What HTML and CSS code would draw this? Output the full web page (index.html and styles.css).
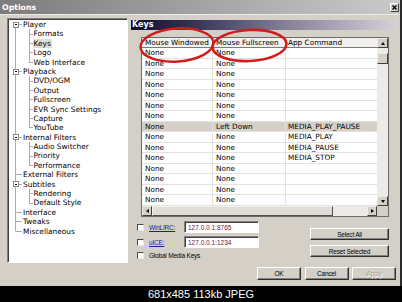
FILE: index.html
```html
<!DOCTYPE html>
<html>
<head>
<meta charset="utf-8">
<link rel="stylesheet" href="styles.css">
</head>
<body>
<div class="window">
  <div class="titlebar">
    <span class="title">Options</span>
    <span class="close"><svg width="5" height="5" viewBox="0 0 5 5"><path d="M0.5 0.5L4.5 4.5M4.5 0.5L0.5 4.5" stroke="#000" stroke-width="1.3"/></svg></span>
  </div>
  <div class="main">
    <div class="tree">
      <div class="tr root first"><span class="g0"><span class="box"></span></span><span class="lbl">Player</span></div>
      <div class="tr"><span class="g0"></span><span class="g1"></span><span class="lbl">Formats</span></div>
      <div class="tr"><span class="g0"></span><span class="g1"></span><span class="lbl sel">Keys</span></div>
      <div class="tr"><span class="g0"></span><span class="g1"></span><span class="lbl">Logo</span></div>
      <div class="tr"><span class="g0"></span><span class="g1 lastc"></span><span class="lbl">Web Interface</span></div>
      <div class="tr root"><span class="g0"><span class="box"></span></span><span class="lbl">Playback</span></div>
      <div class="tr"><span class="g0"></span><span class="g1"></span><span class="lbl">DVD/OGM</span></div>
      <div class="tr"><span class="g0"></span><span class="g1"></span><span class="lbl">Output</span></div>
      <div class="tr"><span class="g0"></span><span class="g1"></span><span class="lbl">Fullscreen</span></div>
      <div class="tr"><span class="g0"></span><span class="g1"></span><span class="lbl">EVR Sync Settings</span></div>
      <div class="tr"><span class="g0"></span><span class="g1"></span><span class="lbl">Capture</span></div>
      <div class="tr"><span class="g0"></span><span class="g1 lastc"></span><span class="lbl">YouTube</span></div>
      <div class="tr root"><span class="g0"><span class="box"></span></span><span class="lbl">Internal Filters</span></div>
      <div class="tr"><span class="g0"></span><span class="g1"></span><span class="lbl">Audio Switcher</span></div>
      <div class="tr"><span class="g0"></span><span class="g1"></span><span class="lbl">Priority</span></div>
      <div class="tr"><span class="g0"></span><span class="g1 lastc"></span><span class="lbl">Performance</span></div>
      <div class="tr root leaf"><span class="g0"></span><span class="lbl">External Filters</span></div>
      <div class="tr root"><span class="g0"><span class="box"></span></span><span class="lbl">Subtitles</span></div>
      <div class="tr"><span class="g0"></span><span class="g1"></span><span class="lbl">Rendering</span></div>
      <div class="tr"><span class="g0"></span><span class="g1 lastc"></span><span class="lbl">Default Style</span></div>
      <div class="tr root leaf"><span class="g0"></span><span class="lbl">Interface</span></div>
      <div class="tr root leaf"><span class="g0"></span><span class="lbl">Tweaks</span></div>
      <div class="tr root leaf last"><span class="g0"></span><span class="lbl">Miscellaneous</span></div>
    </div>
    <div class="panel">
      <div class="keysbar">Keys</div>
      <div class="list">
        <div class="view">
          <div class="hdr"><span class="c1">Mouse Windowed</span><span class="c2">Mouse Fullscreen</span><span class="c3">App Command</span></div>
          <div class="row"><span class="c1">None</span><span class="c2">None</span><span class="c3"></span></div>
          <div class="row"><span class="c1">None</span><span class="c2">None</span><span class="c3"></span></div>
          <div class="row"><span class="c1">None</span><span class="c2">None</span><span class="c3"></span></div>
          <div class="row"><span class="c1">None</span><span class="c2">None</span><span class="c3"></span></div>
          <div class="row"><span class="c1">None</span><span class="c2">None</span><span class="c3"></span></div>
          <div class="row"><span class="c1">None</span><span class="c2">None</span><span class="c3"></span></div>
          <div class="row"><span class="c1">None</span><span class="c2">None</span><span class="c3"></span></div>
          <div class="row selrow"><span class="c1">None</span><span class="c2">Left Down</span><span class="c3">MEDIA_PLAY_PAUSE</span></div>
          <div class="row"><span class="c1">None</span><span class="c2">None</span><span class="c3">MEDIA_PLAY</span></div>
          <div class="row"><span class="c1">None</span><span class="c2">None</span><span class="c3">MEDIA_PAUSE</span></div>
          <div class="row"><span class="c1">None</span><span class="c2">None</span><span class="c3">MEDIA_STOP</span></div>
          <div class="row"><span class="c1">None</span><span class="c2">None</span><span class="c3"></span></div>
          <div class="row"><span class="c1">None</span><span class="c2">None</span><span class="c3"></span></div>
          <div class="row"><span class="c1">None</span><span class="c2">None</span><span class="c3"></span></div>
          <div class="row"><span class="c1">None</span><span class="c2">None</span><span class="c3"></span></div>
        </div>
        <div class="vscroll">
          <span class="sbb"><span class="ar up"></span></span>
          <span class="vtrack"><span class="vthumb"></span></span>
          <span class="sbb"><span class="ar down"></span></span>
        </div>
        <div class="hscroll">
          <span class="sbb"><span class="ar left"></span></span>
          <span class="hthumb"></span>
          <span class="htrack"></span>
          <span class="sbb"><span class="ar right"></span></span>
        </div>
        <div class="corner"></div>
      </div>
      <div class="form">
        <div class="opts">
          <div class="opt"><span class="cb"></span><span class="link">WinLIRC:</span><span class="edit">127.0.0.1:8765</span></div>
          <div class="opt"><span class="cb"></span><span class="link">uICE:</span><span class="edit">127.0.0.1:1234</span></div>
          <div class="opt short"><span class="cb"></span><span>Global Media Keys</span></div>
        </div>
        <div class="sidebtns">
          <span class="btn side">Select All</span>
          <span class="btn side">Reset Selected</span>
        </div>
      </div>
    </div>
  </div>
  <div class="buttons">
    <span class="btn bb">OK</span>
    <span class="btn bb">Cancel</span>
    <span class="btn bb disabled">Apply</span>
  </div>
</div>
<div class="caption">681x485 113kb JPEG</div>
<svg class="marks" width="402" height="302" viewBox="0 0 402 302">
  <ellipse cx="177" cy="45" rx="36.5" ry="16.5" transform="rotate(-4 177 45)" fill="none" stroke="#d21c1c" stroke-width="2.4"/>
  <ellipse cx="249.5" cy="45.5" rx="37" ry="15.5" transform="rotate(-3 249.5 45.5)" fill="none" stroke="#d21c1c" stroke-width="2.6"/>
</svg>
</body>
</html>
```

FILE: styles.css
```css
body {
  margin: 0;
  width: 402px;
  height: 302px;
  background: #000;
  position: relative;
  overflow: hidden;
  font-family: "DejaVu Sans", sans-serif;
}

.window {
  width: 402px;
  height: 286px;
  box-sizing: border-box;
  background: #d4d0c8;
  border-right: 2px solid #2a2a2a;
  display: flex;
  flex-direction: column;
}

.titlebar {
  height: 14px;
  flex: none;
  background: linear-gradient(to right, #7c7c7c, #cacaca);
  display: flex;
  align-items: center;
  justify-content: space-between;
  padding: 0 1px 0 2px;
  box-shadow: 0 1px 0 #ecebe8;
}

.title {
  color: #fff;
  font-weight: bold;
  font-size: 7.8px;
}

.close {
  width: 9px;
  height: 9px;
  box-sizing: border-box;
  background: #d4d0c8;
  border: 1px solid;
  border-color: #fff #404040 #404040 #fff;
  display: flex;
  align-items: center;
  justify-content: center;
}

.main {
  display: flex;
  gap: 3px;
  padding: 4px 0 0 7px;
  height: 245px;
  flex: none;
}

/* Tree */
.tree {
  width: 121px;
  height: 245px;
  box-sizing: border-box;
  background: #fff;
  border: 1px solid;
  border-color: #808080 #fff #fff #808080;
  box-shadow: inset 1px 1px 0 #404040;
  padding-top: 1px;
  font-size: 7.4px;
  color: #000;
}

.tr {
  height: 9.4px;
  line-height: 9.4px;
  display: flex;
  align-items: center;
  white-space: nowrap;
}

.g0 {
  width: 15px;
  height: 100%;
  flex: none;
  display: flex;
  align-items: center;
  background: linear-gradient(#ababab, #ababab) no-repeat 7px 0 / 1px 100%;
}

.root .g0 {
  background:
    linear-gradient(#ababab, #ababab) no-repeat 7px 0 / 1px 100%,
    linear-gradient(#ababab, #ababab) no-repeat 10px 50% / 4px 1px;
}

.root.leaf .g0 {
  background:
    linear-gradient(#ababab, #ababab) no-repeat 7px 0 / 1px 100%,
    linear-gradient(#ababab, #ababab) no-repeat 8px 50% / 6px 1px;
}

.root.first .g0 {
  background:
    linear-gradient(#ababab, #ababab) no-repeat 7px 100% / 1px 50%,
    linear-gradient(#ababab, #ababab) no-repeat 10px 50% / 4px 1px;
}

.root.leaf.last .g0 {
  background:
    linear-gradient(#ababab, #ababab) no-repeat 7px 0 / 1px 50%,
    linear-gradient(#ababab, #ababab) no-repeat 8px 50% / 6px 1px;
}

.box {
  width: 6px;
  height: 6px;
  box-sizing: border-box;
  margin-left: 4.5px;
  border: 1px solid #8a8a8a;
  background: linear-gradient(#000, #000) no-repeat 50% 50% / 2px 1px, #fff;
}

.g1 {
  width: 10.5px;
  height: 100%;
  flex: none;
  background:
    linear-gradient(#ababab, #ababab) no-repeat 6px 0 / 1px 100%,
    linear-gradient(#ababab, #ababab) no-repeat 6px 50% / 4px 1px;
}

.g1.lastc {
  background:
    linear-gradient(#ababab, #ababab) no-repeat 6px 0 / 1px 50%,
    linear-gradient(#ababab, #ababab) no-repeat 6px 50% / 4px 1px;
}

.lbl.sel {
  background: #dedcd6;
  padding: 0 1px;
  margin-left: -1px;
}

/* Right panel */
.panel {
  width: 267px;
  display: flex;
  flex-direction: column;
}

.keysbar {
  margin-top: 2px;
  height: 10px;
  line-height: 10px;
  background: linear-gradient(to right, #0e0e2e, #3a3658 25%, #8a849c 60%, #d6d2da);
  color: #fff;
  font-weight: bold;
  font-size: 8px;
  padding-left: 1px;
}

.list {
  margin: 7px 0 0 10px;
  width: 248px;
  height: 180px;
  box-sizing: border-box;
  border: 1px solid #6a6a6a;
  background: #fff;
  display: grid;
  grid-template-columns: 1fr 11px;
  grid-template-rows: 1fr 10px;
  font-size: 7.3px;
  color: #000;
}

.view {
  overflow: hidden;
}

.hdr, .row {
  display: grid;
  grid-template-columns: 71px 73px 1fr;
  white-space: nowrap;
}

.hdr {
  height: 10px;
  line-height: 9px;
  box-sizing: border-box;
  background: #f2f1ed;
  border-bottom: 1px solid #7a7a7a;
}

.hdr span {
  box-sizing: border-box;
  border-right: 1px solid #8a8a8a;
}

.hdr .c3 {
  border-right: none;
}

.row {
  height: 10.5px;
  line-height: 10.5px;
  box-shadow: inset 0 -1px 0 #e2e2e0;
}

.row span {
  box-sizing: border-box;
  border-right: 1px solid #e2e2e0;
  overflow: hidden;
}

.row .c3 {
  border-right: none;
}

.c1 { padding-left: 3px; }
.c2 { padding-left: 3px; }
.c3 { padding-left: 2px; }

.row.selrow {
  background: #d4d0c8;
}

/* Scrollbars */
.vscroll {
  display: flex;
  flex-direction: column;
}

.sbb {
  flex: none;
  width: 11px;
  height: 10px;
  box-sizing: border-box;
  background: #d4d0c8;
  border: 1px solid;
  border-color: #eeece8 #404040 #404040 #eeece8;
  display: flex;
  align-items: center;
  justify-content: center;
}

.hscroll .sbb {
  width: 10px;
}

.vtrack {
  flex: 1;
  background: #ecebe7;
  padding-top: 5px;
}

.vthumb {
  display: block;
  height: 11px;
  box-sizing: border-box;
  background: #d4d0c8;
  border: 1px solid;
  border-color: #eeece8 #404040 #404040 #eeece8;
}

.hscroll {
  display: flex;
}

.hthumb {
  width: 181px;
  flex: none;
  box-sizing: border-box;
  background: #e0ddd6;
  border: 1px solid;
  border-color: #f4f2ee #505050 #505050 #f4f2ee;
}

.htrack {
  flex: 1;
  background: #ecebe7;
}

.corner {
  background: #d4d0c8;
}

.ar {
  width: 0;
  height: 0;
}

.ar.up {
  border-left: 2.5px solid transparent;
  border-right: 2.5px solid transparent;
  border-bottom: 3px solid #000;
}

.ar.down {
  border-left: 2.5px solid transparent;
  border-right: 2.5px solid transparent;
  border-top: 3px solid #000;
}

.ar.left {
  border-top: 2.5px solid transparent;
  border-bottom: 2.5px solid transparent;
  border-right: 3px solid #000;
}

.ar.right {
  border-top: 2.5px solid transparent;
  border-bottom: 2.5px solid transparent;
  border-left: 3px solid #000;
}

/* Form */
.form {
  flex: 1;
  display: flex;
  justify-content: space-between;
  font-family: "Liberation Sans", Arial, sans-serif;
  font-size: 6.5px;
  color: #000;
}

.opts {
  margin: 4px 0 0 6px;
  display: flex;
  flex-direction: column;
  gap: 3px;
}

.opt {
  display: flex;
  align-items: center;
  height: 12px;
  letter-spacing: -0.2px;
  white-space: nowrap;
}

.opt.short {
  height: 8px;
}

.cb {
  width: 7px;
  height: 7px;
  box-sizing: border-box;
  flex: none;
  margin-right: 5px;
  background: #fff;
  border: 1px solid;
  border-color: #4a4a4a #e8e8e8 #e8e8e8 #4a4a4a;
}

.link {
  width: 35px;
  color: #1c1ca4;
  text-decoration: underline;
}

.edit {
  width: 75px;
  height: 12px;
  box-sizing: border-box;
  background: #fff;
  border: 1px solid;
  border-color: #808080 #fff #fff #808080;
  box-shadow: inset 1px 1px 0 #404040;
  color: #6c1838;
  padding-left: 3px;
  display: flex;
  align-items: center;
  letter-spacing: 0;
}

.sidebtns {
  margin: 11px 9px 0 0;
  display: flex;
  flex-direction: column;
  gap: 5px;
}

.btn {
  box-sizing: border-box;
  background: #d4d0c8;
  border: 1px solid;
  border-color: #fff #303030 #303030 #fff;
  box-shadow: inset -1px -1px 0 #808080;
  display: flex;
  align-items: center;
  justify-content: center;
  font-family: "Liberation Sans", Arial, sans-serif;
  font-size: 6.5px;
  letter-spacing: -0.2px;
  color: #000;
  white-space: nowrap;
}

.btn.side {
  width: 79px;
  height: 12px;
}

.buttons {
  display: flex;
  justify-content: flex-end;
  gap: 3.5px;
  padding: 4px 4px 0 0;
}

.btn.bb {
  width: 44px;
  height: 13px;
}

.btn.disabled {
  color: #a4a29c;
  text-shadow: 1px 1px 0 #fff;
}

.caption {
  height: 16px;
  display: flex;
  align-items: center;
  justify-content: center;
  color: #fff;
  font-family: "Liberation Sans", Arial, sans-serif;
  font-size: 11px;
}

.marks {
  position: absolute;
  left: 0;
  top: 0;
  pointer-events: none;
}
```
